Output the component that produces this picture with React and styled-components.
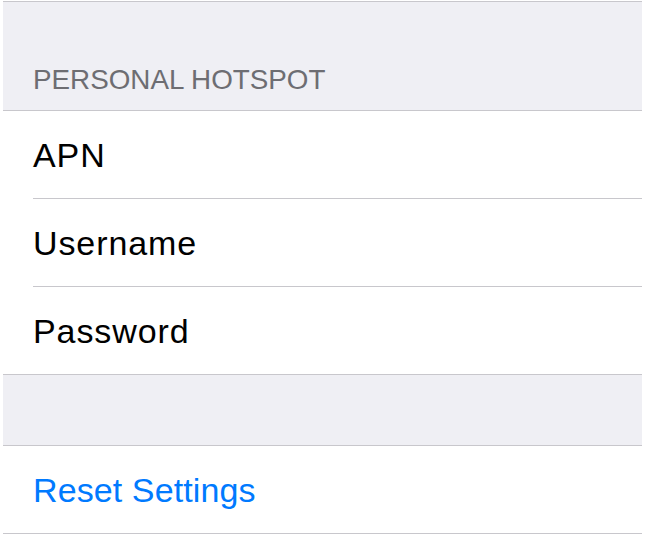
import React from 'react';
import styled, { createGlobalStyle } from 'styled-components';

const GlobalStyle = createGlobalStyle`
  html, body {
    margin: 0;
    padding: 0;
    background: #ffffff;
  }
  body {
    font-family: "Liberation Sans", Arial, Helvetica, sans-serif;
  }
`;

const Screen = styled.div`
  width: 639px;
  margin: 0 3px;
  padding-top: 1px;
  background: #ffffff;
`;

const Table = styled.div`
  display: flex;
  flex-direction: column;
  background: #efeff4;
  border-top: 1px solid #c8c7cc;
`;

const SectionHeader = styled.div`
  height: 109px;
  display: flex;
  align-items: flex-end;
  box-sizing: border-box;
  padding: 0 0 16px 30px;
  border-bottom: 1px solid #c8c7cc;
  font-size: 27.8px;
  line-height: 28px;
  color: #6d6d72;
  text-transform: uppercase;
`;

const Spacer = styled.div`
  height: 70px;
  border-bottom: 1px solid #c8c7cc;
`;

const Group = styled.div`
  background: #ffffff;
  padding-left: 30px;
  border-bottom: 1px solid #c8c7cc;
`;

const Row = styled.div`
  height: 87px;
  display: flex;
  align-items: center;
  font-size: 34px;
  line-height: 34px;
  letter-spacing: ${(p) => (p.$action ? '0.1px' : '0.9px')};
  color: ${(p) => (p.$action ? '#007aff' : '#000000')};
  border-bottom: ${(p) => (p.$last ? 'none' : '1px solid #c8c7cc')};
`;

const fields = ['APN', 'Username', 'Password'];

export default function App() {
  return (
    <Screen>
      <GlobalStyle />
      <Table>
        <SectionHeader>Personal Hotspot</SectionHeader>
        <Group>
          {fields.map((f, i) => (
            <Row key={f} $last={i === fields.length - 1}>
              {f}
            </Row>
          ))}
        </Group>
        <Spacer />
        <Group>
          <Row $action $last>
            Reset Settings
          </Row>
        </Group>
      </Table>
    </Screen>
  );
}
